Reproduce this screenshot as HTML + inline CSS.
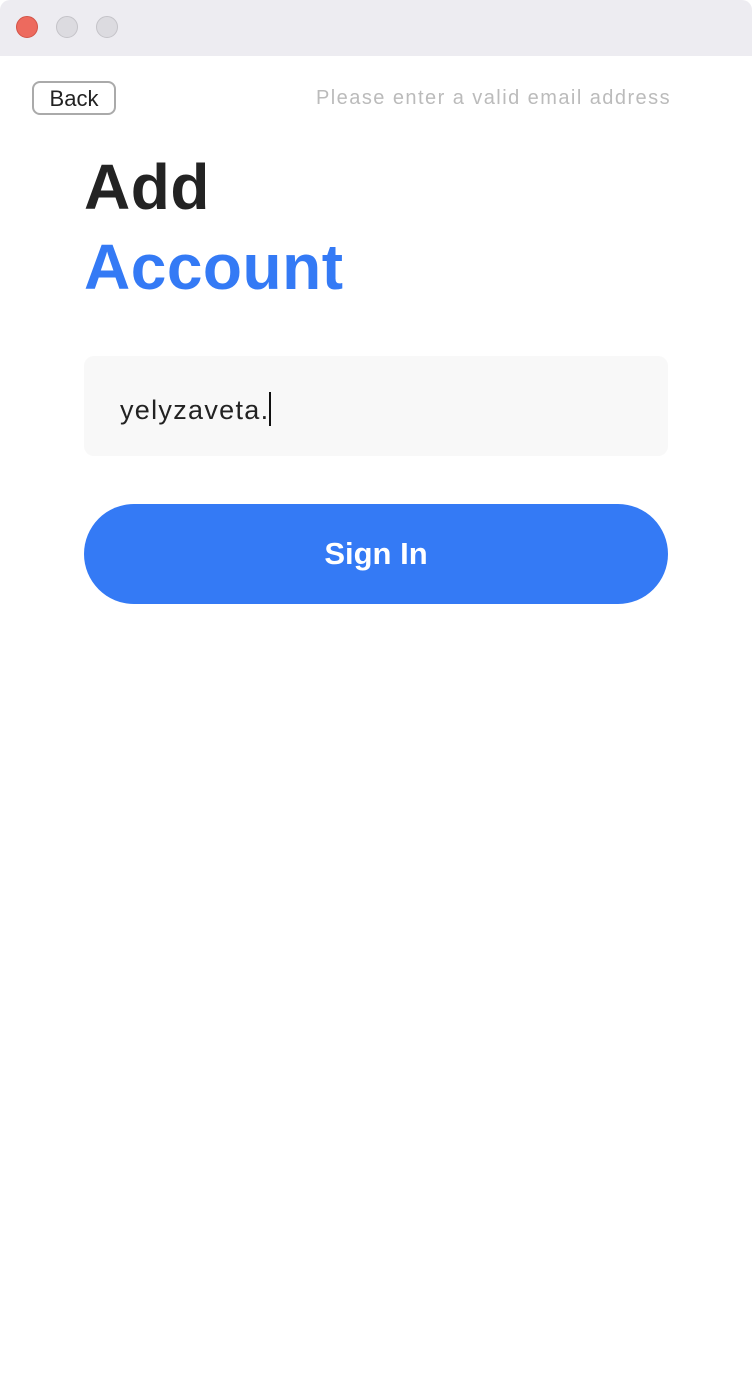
<!DOCTYPE html>
<html><head><style>
body{margin:0;width:752px;height:1390px;background:#fff;font-family:"Liberation Sans",sans-serif;position:relative;overflow:hidden}
.bar{position:absolute;left:0;top:0;width:752px;height:56px;background:#edecf1;border-radius:10px 10px 0 0}
.dot{position:absolute;top:16px;width:22px;height:22px;border-radius:50%;box-sizing:border-box}
.back{position:absolute;left:32px;top:81px;width:84px;height:34px;box-sizing:border-box;border:2px solid #aaa;border-radius:8px;font-size:22px;color:#222;text-align:center;line-height:32px}
.msg{position:absolute;left:316px;top:87px;font-size:20px;color:#bbb;letter-spacing:1.45px;white-space:nowrap}
h1{position:absolute;left:84px;margin:0;font-size:64px;font-weight:bold;letter-spacing:0.5px}
.inp{position:absolute;left:84px;top:356px;width:584px;height:100px;background:#f8f8f8;border-radius:10px}
.inp span{position:absolute;left:36px;top:36px;font-size:27px;color:#222;letter-spacing:1.3px}
.caret{display:inline-block;width:2px;height:34px;background:#111;vertical-align:-7px}
.btn{position:absolute;left:84px;top:504px;width:584px;height:100px;background:#347af5;border-radius:50px;color:#fff;font-size:31px;font-weight:bold;text-align:center;line-height:100px}
</style></head><body>
<div class="bar"></div>
<div class="dot" style="left:16px;background:#ed6a5e;border:1px solid #d35347"></div>
<div class="dot" style="left:56px;background:#dcdbe0;border:1px solid #c4c3c8"></div>
<div class="dot" style="left:96px;background:#dcdbe0;border:1px solid #c4c3c8"></div>
<div class="back">Back</div>
<div class="msg">Please enter a valid email address</div>
<h1 style="top:150px;color:#232323">Add</h1>
<h1 style="top:230px;color:#347af5">Account</h1>
<div class="inp"><span>yelyzaveta.<i class="caret"></i></span></div>
<div class="btn">Sign In</div>
</body></html>
